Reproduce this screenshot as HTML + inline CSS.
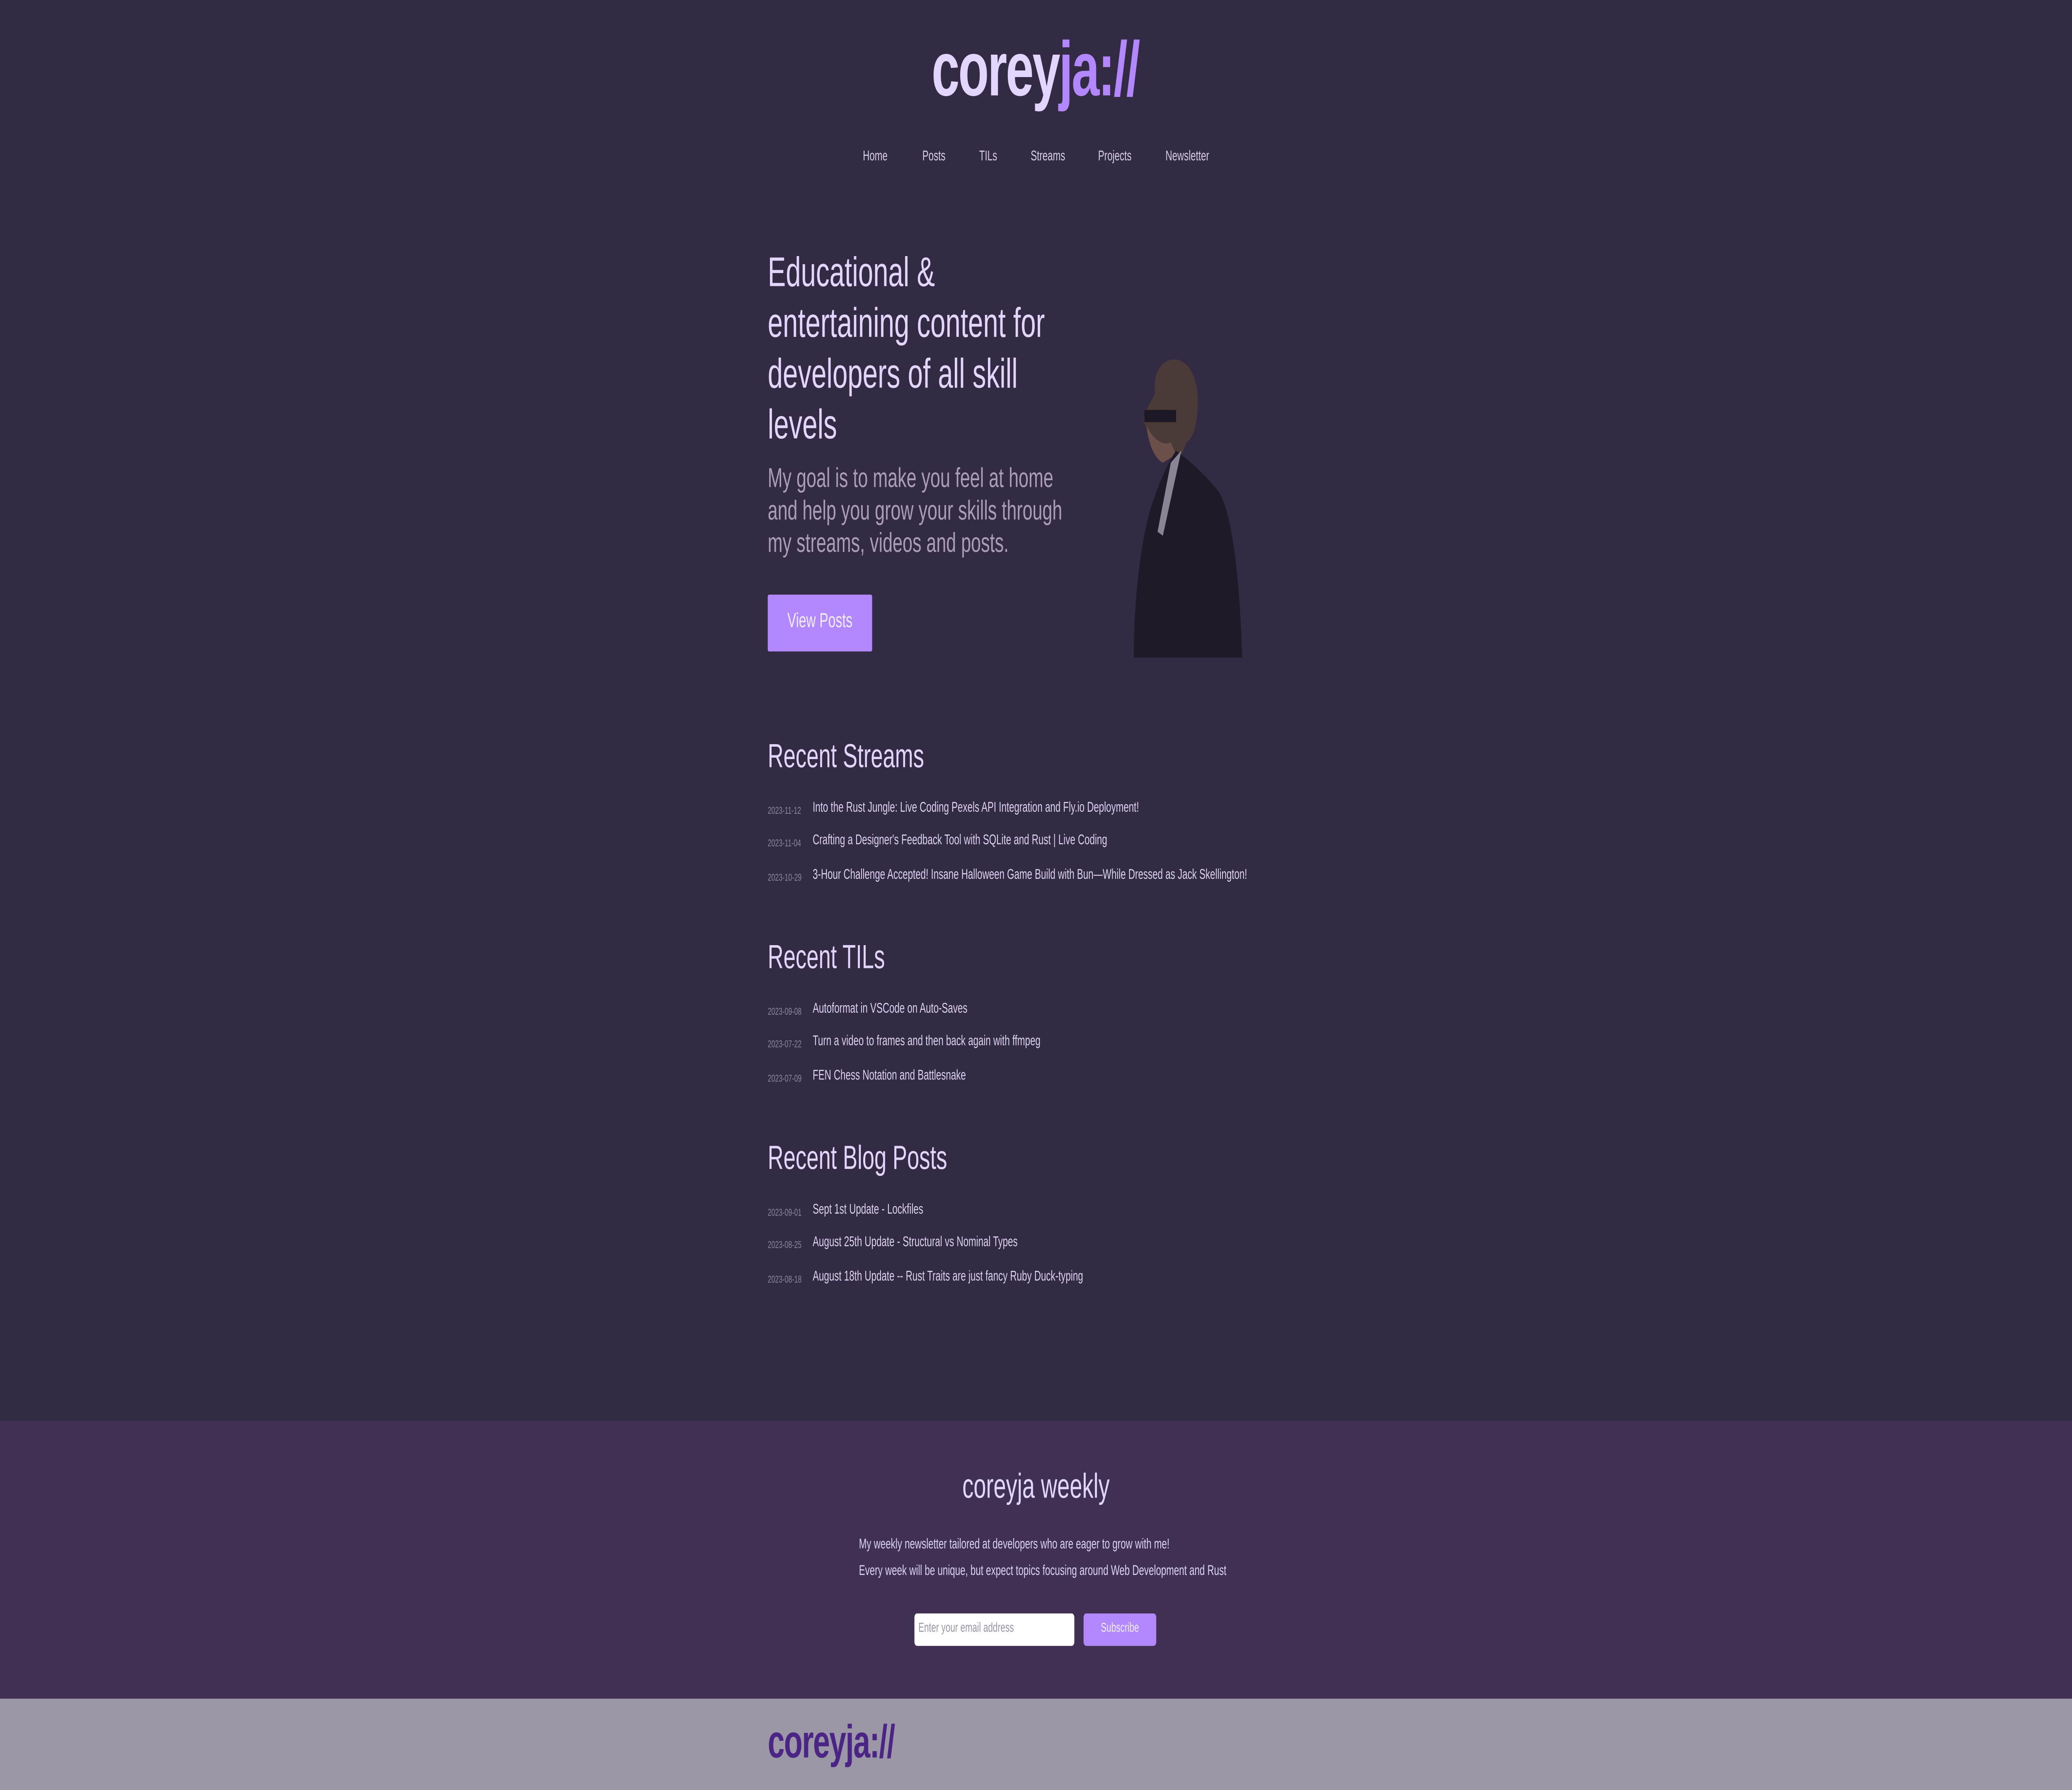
<!DOCTYPE html>
<html><head><meta charset="utf-8">
<style>
html,body{margin:0;padding:0;background:#332a44;overflow:hidden;}
#w{position:absolute;left:0;top:0;width:1568px;height:882px;transform-origin:0 0;background:#332a44;font-family:"Liberation Sans",sans-serif;color:#e2d6ff;}
.a{position:absolute;white-space:nowrap;}
.logo{font-weight:bold;letter-spacing:-1px;}
.nav{font-size:7px;color:#d8d0e6;top:74px;}
.date{font-size:5px;color:#8e86a0;}
.it{font-size:7px;color:#ddd3f5;}
</style></head><body><div id="w">
<div class="a logo" style="left:705px;top:12px;font-size:38px;line-height:46px;"><span style="color:#e2d6ff">corey</span><span style="color:#b388ff">ja://</span></div>
<div class="a nav" style="left:653px">Home</div>
<div class="a nav" style="left:698px">Posts</div>
<div class="a nav" style="left:741px">TILs</div>
<div class="a nav" style="left:780px">Streams</div>
<div class="a nav" style="left:831px">Projects</div>
<div class="a nav" style="left:882px">Newsletter</div>

<div class="a" style="left:581px;top:122px;width:232px;white-space:normal;font-size:20.5px;line-height:25px;color:#e2d6ff;">Educational &amp; entertaining content for developers of all skill levels</div>
<div class="a" style="left:581px;top:228px;width:235px;white-space:normal;font-size:13.5px;line-height:16px;color:#a89fb4;">My goal is to make you feel at home and help you grow your skills through my streams, videos and posts.</div>
<div class="a" style="left:581px;top:293px;width:79px;height:28px;background:#b388ff;border-radius:1px;color:#eee;font-size:10px;line-height:28px;text-align:center;">View Posts</div>

<svg class="a" style="left:850px;top:172px" width="95" height="155" viewBox="0 0 95 155">
<path d="M24 22 C22 8 34 3 44 6 C54 9 58 20 56 32 C55 40 52 44 48 46 L44 52 C40 54 32 52 27 46 C20 42 14 38 16 32 Z" fill="#4a3a38"/>
<path d="M16 30 L40 30 L40 36 L16 36 Z" fill="#1c1824"/>
<path d="M18 38 C22 44 30 48 36 46 L40 52 L30 56 C24 54 20 48 18 40Z" fill="#6a5048"/>
<path d="M40 50 C52 56 62 62 72 70 C82 80 88 110 90 152 L8 152 C8 120 14 95 20 80 C26 68 32 58 40 50 Z" fill="#1e1a28"/>
<path d="M36 56 L44 50 L30 92 L26 90 Z" fill="#8a8494"/>
</svg>

<div class="a" style="left:581px;top:364px;font-size:16.5px;">Recent Streams</div>
<div class="a date" style="left:581px;top:397px">2023-11-12</div><div class="a it" style="left:615px;top:395px">Into the Rust Jungle: Live Coding Pexels API Integration and Fly.io Deployment!</div>
<div class="a date" style="left:581px;top:413px">2023-11-04</div><div class="a it" style="left:615px;top:411px">Crafting a Designer's Feedback Tool with SQLite and Rust | Live Coding</div>
<div class="a date" style="left:581px;top:430px">2023-10-29</div><div class="a it" style="left:615px;top:428px">3-Hour Challenge Accepted! Insane Halloween Game Build with Bun—While Dressed as Jack Skellington!</div>

<div class="a" style="left:581px;top:463px;font-size:16.5px;">Recent TILs</div>
<div class="a date" style="left:581px;top:496px">2023-09-08</div><div class="a it" style="left:615px;top:494px">Autoformat in VSCode on Auto-Saves</div>
<div class="a date" style="left:581px;top:512px">2023-07-22</div><div class="a it" style="left:615px;top:510px">Turn a video to frames and then back again with ffmpeg</div>
<div class="a date" style="left:581px;top:529px">2023-07-09</div><div class="a it" style="left:615px;top:527px">FEN Chess Notation and Battlesnake</div>

<div class="a" style="left:581px;top:562px;font-size:16.5px;">Recent Blog Posts</div>
<div class="a date" style="left:581px;top:595px">2023-09-01</div><div class="a it" style="left:615px;top:593px">Sept 1st Update - Lockfiles</div>
<div class="a date" style="left:581px;top:611px">2023-08-25</div><div class="a it" style="left:615px;top:609px">August 25th Update - Structural vs Nominal Types</div>
<div class="a date" style="left:581px;top:628px">2023-08-18</div><div class="a it" style="left:615px;top:626px">August 18th Update -- Rust Traits are just fancy Ruby Duck-typing</div>

<div class="a" style="left:0;top:700px;width:1568px;height:137px;background:#3f3054;"></div>
<div class="a" style="left:0;top:723px;width:1568px;text-align:center;font-size:17px;color:#e2d6ff;">coreyja weekly</div>
<div class="a" style="left:650px;top:758px;font-size:7px;color:#ddd3f5;">My weekly newsletter tailored at developers who are eager to grow with me!</div>
<div class="a" style="left:650px;top:771px;font-size:7px;color:#ddd3f5;">Every week will be unique, but expect topics focusing around Web Development and Rust</div>
<div class="a" style="left:692px;top:795px;width:121px;height:16px;background:#fff;border-radius:2px;"></div>
<div class="a" style="left:695px;top:799px;font-size:6.5px;color:#9a93a6;">Enter your email address</div>
<div class="a" style="left:820px;top:795px;width:55px;height:16px;background:#b388ff;border-radius:2px;color:#eee;font-size:6.5px;line-height:16px;text-align:center;">Subscribe</div>

<div class="a" style="left:0;top:837px;width:1568px;height:45px;background:#9c97a6;"></div>
<div class="a logo" style="left:581px;top:844px;font-size:23px;line-height:28px;color:#4b2585;letter-spacing:-0.5px;">coreyja://</div>
</div>
<script>
(function(){
var W=window.innerWidth||document.documentElement.clientWidth;
var H=window.innerHeight||document.documentElement.clientHeight;
var sx=W/1568, sy=H/882;
var w=document.getElementById('w');
w.style.transform='scale('+sx+','+sy+')';
document.body.style.width=W+'px';
document.body.style.height=H+'px';
document.documentElement.style.height=H+'px';
})();
</script>
</body></html>
